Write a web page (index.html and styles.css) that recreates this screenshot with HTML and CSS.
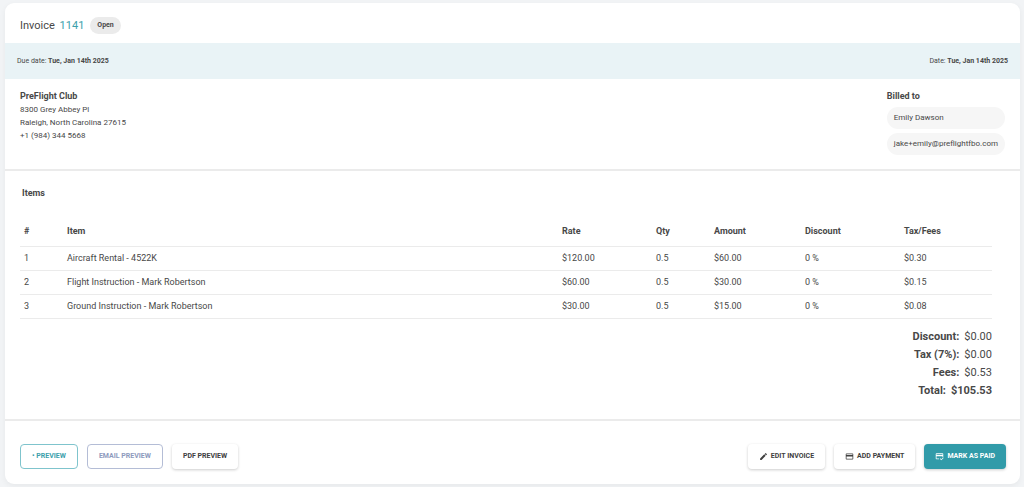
FILE: index.html
```html
<!DOCTYPE html>
<html lang="en">
<head>
<meta charset="utf-8">
<meta name="viewport" content="width=device-width, initial-scale=1">
<title>Invoice 1141</title>
<link rel="stylesheet" href="styles.css">
</head>
<body>
<main class="card">
  <header class="header">
    <h1 class="title">Invoice <a class="number" href="#">1141</a></h1>
    <span class="status">Open</span>
  </header>
  <div class="dates">
    <span>Due date: <b>Tue, Jan 14th 2025</b></span>
    <span>Date: <b>Tue, Jan 14th 2025</b></span>
  </div>
  <section class="parties">
    <address class="company">
      <h2 class="party-name">PreFlight Club</h2>
      <p>8300 Grey Abbey Pl</p>
      <p>Raleigh, North Carolina 27615</p>
      <p>+1 (984) 344 5668</p>
    </address>
    <div class="billed">
      <h2 class="party-name">Billed to</h2>
      <span class="chip">Emily Dawson</span>
      <span class="chip">jake+emily@preflightfbo.com</span>
    </div>
  </section>
  <section class="items">
    <h2 class="items-title">Items</h2>
    <table class="table">
      <colgroup><col class="c-num"><col><col class="c-rate"><col class="c-qty"><col class="c-amount"><col class="c-discount"><col class="c-tax"></colgroup>
      <thead>
        <tr><th>#</th><th>Item</th><th>Rate</th><th>Qty</th><th>Amount</th><th>Discount</th><th>Tax/Fees</th></tr>
      </thead>
      <tbody>
        <tr><td>1</td><td>Aircraft Rental - 4522K</td><td>$120.00</td><td>0.5</td><td>$60.00</td><td>0 %</td><td>$0.30</td></tr>
        <tr><td>2</td><td>Flight Instruction - Mark Robertson</td><td>$60.00</td><td>0.5</td><td>$30.00</td><td>0 %</td><td>$0.15</td></tr>
        <tr><td>3</td><td>Ground Instruction - Mark Robertson</td><td>$30.00</td><td>0.5</td><td>$15.00</td><td>0 %</td><td>$0.08</td></tr>
      </tbody>
    </table>
    <div class="totals">
      <p><b>Discount:</b><span>$0.00</span></p>
      <p><b>Tax (7%):</b><span>$0.00</span></p>
      <p><b>Fees:</b><span>$0.53</span></p>
      <p><b>Total:</b><b>$105.53</b></p>
    </div>
  </section>
  <footer class="actions">
    <div class="group">
      <button class="btn outline-teal" type="button">• PREVIEW</button>
      <button class="btn outline-slate" type="button">EMAIL PREVIEW</button>
      <button class="btn" type="button">PDF PREVIEW</button>
    </div>
    <div class="group">
      <button class="btn" type="button">
        <svg class="icon" viewBox="0 0 24 24" aria-hidden="true"><path d="M3 17.25V21h3.75L17.81 9.94l-3.75-3.75zM20.71 7.04a1 1 0 0 0 0-1.41l-2.34-2.34a1 1 0 0 0-1.41 0l-1.83 1.83 3.75 3.75z"/></svg>EDIT INVOICE</button>
      <button class="btn" type="button">
        <svg class="icon" viewBox="0 0 24 24" aria-hidden="true"><path d="M20 4H4a2 2 0 0 0-2 2v12a2 2 0 0 0 2 2h16a2 2 0 0 0 2-2V6a2 2 0 0 0-2-2zm0 14H4v-6h16zm0-10H4V6h16z"/></svg>ADD PAYMENT</button>
      <button class="btn solid" type="button">
        <svg class="icon" viewBox="0 0 24 24" aria-hidden="true"><path d="M4 3a2 2 0 0 0-2 2v12a2 2 0 0 0 2 2h7v-2H4v-6h16v3h2V5a2 2 0 0 0-2-2zm0 2h16v2H4zm10.300 11.800-1.500 1.500L16.700 22.200 23 15.900l-1.500-1.500-4.800 4.800z"/></svg>MARK AS PAID</button>
    </div>
  </footer>
</main>
</body>
</html>
```
FILE: styles.css
```css
* { box-sizing: border-box; }
body {
  margin: 0;
  padding: 3px 4px 3px 5px;
  background: #f2f4f6;
  color: #484848;
  font: 8px/13px Roboto, sans-serif;
}
h1, h2, p { margin: 0; }
.card {
  background: #fff;
  border-radius: 9px;
  box-shadow: 0 2px 6px rgba(0, 0, 0, 0.05);
}
.header {
  display: flex;
  align-items: center;
  gap: 6px;
  padding: 14px 15px 9px;
}
.title { font-size: 11px; line-height: 17px; font-weight: 400; }
.number { color: #3c9fac; text-decoration: none; margin-left: 2px; }
.status {
  padding: 2px 7px;
  border-radius: 9px;
  background: #ebebeb;
  font-size: 7px;
  font-weight: 700;
}
.dates {
  display: flex;
  justify-content: space-between;
  padding: 12px;
  background: #e9f3f6;
  font-size: 7px;
  line-height: 12px;
}
.parties {
  display: flex;
  justify-content: space-between;
  padding: 10px 15px 14px;
  border-bottom: 2px solid #ebebeb;
}
.company { font-style: normal; }
.party-name { font-size: 9px; line-height: 14px; font-weight: 700; }
.billed { display: flex; flex-direction: column; gap: 4px; }
.chip {
  padding: 5px 7px;
  border-radius: 11px;
  background: #f6f6f6;
  line-height: 12px;
}
.items { padding: 15px 28px 19px 15px; border-bottom: 2px solid #ebebeb; }
.items-title { margin: 0 2px 18px; font-size: 9px; line-height: 14px; }
.table {
  width: 100%;
  table-layout: fixed;
  border-collapse: collapse;
  font-size: 9px;
}
.c-num { width: 43px; }
.c-rate { width: 94px; }
.c-qty { width: 58px; }
.c-amount { width: 91px; }
.c-discount { width: 99px; }
.c-tax { width: 92px; }
.table th, .table td {
  height: 24px;
  padding: 0 4px;
  border-bottom: 1px solid #ebebeb;
  text-align: left;
}
.table th { height: 28px; font-weight: 700; }
.totals {
  padding-top: 9px;
  font-size: 11px;
  line-height: 18px;
}
.totals p { display: flex; justify-content: flex-end; gap: 5px; }
.actions {
  display: flex;
  justify-content: space-between;
  padding: 23px 14px 15px 15px;
}
.group { display: flex; gap: 9px; }
.btn {
  display: flex;
  align-items: center;
  gap: 3px;
  height: 25px;
  padding: 0 11px;
  border: 0;
  border-radius: 4px;
  background: #fff;
  box-shadow: 0 1px 3px rgba(0, 0, 0, 0.2);
  color: #404040;
  font: 700 7px/12px Roboto, sans-serif;
  cursor: pointer;
}
.outline-teal, .outline-slate { border: 1px solid; box-shadow: none; }
.outline-teal { border-color: #7fc4cd; color: #3c9fac; }
.outline-slate { border-color: #b4bdd6; color: #8e9abd; }
.solid { background: #319ba9; color: #fff; }
.icon { width: 9px; height: 9px; fill: currentColor; }
```
